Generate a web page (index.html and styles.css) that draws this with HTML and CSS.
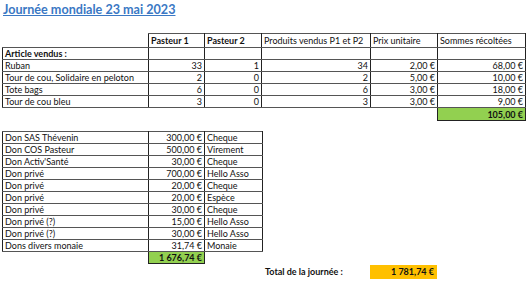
FILE: index.html
```html
<!DOCTYPE html>
<html lang="fr">
<head>
  <meta charset="UTF-8" />
  <title>Journée mondiale 23 mai 2023</title>
  <link rel="stylesheet" href="styles.css">
</head>
<body>

<h1 class="title">Journée mondiale 23 mai 2023</h1>

<table class="sheet sales">
  <colgroup>
    <col style="width:146px"><col style="width:56px"><col style="width:57px">
    <col style="width:109px"><col style="width:67px"><col style="width:88px">
  </colgroup>
  <tr class="head">
    <td class="blank"></td>
    <td class="bold">Pasteur 1</td>
    <td class="bold">Pasteur 2</td>
    <td>Produits vendus P1 et P2</td>
    <td>Prix unitaire</td>
    <td>Sommes récoltées</td>
  </tr>
  <tr>
    <td class="bold">Article vendus :</td>
    <td></td><td></td><td></td><td></td><td></td>
  </tr>
  <tr>
    <td>Ruban</td>
    <td class="num">33</td><td class="num">1</td><td class="num">34</td>
    <td class="num">2,00 €</td><td class="num">68,00 €</td>
  </tr>
  <tr>
    <td>Tour de cou, Solidaire en peloton</td>
    <td class="num">2</td><td class="num">0</td><td class="num">2</td>
    <td class="num">5,00 €</td><td class="num">10,00 €</td>
  </tr>
  <tr>
    <td>Tote bags</td>
    <td class="num">6</td><td class="num">0</td><td class="num">6</td>
    <td class="num">3,00 €</td><td class="num">18,00 €</td>
  </tr>
  <tr>
    <td>Tour de cou bleu</td>
    <td class="num">3</td><td class="num">0</td><td class="num">3</td>
    <td class="num">3,00 €</td><td class="num">9,00 €</td>
  </tr>
  <tr class="foot">
    <td class="blank"></td><td class="blank"></td><td class="blank"></td>
    <td class="blank"></td><td class="blank"></td>
    <td class="num bold green">105,00 €</td>
  </tr>
</table>

<table class="sheet dons">
  <colgroup>
    <col style="width:146px"><col style="width:56px"><col style="width:58px">
  </colgroup>
  <tr><td>Don SAS Thévenin</td><td class="num">300,00 €</td><td>Cheque</td></tr>
  <tr><td>Don COS Pasteur</td><td class="num">500,00 €</td><td>Virement</td></tr>
  <tr><td>Don Activ'Santé</td><td class="num">30,00 €</td><td>Cheque</td></tr>
  <tr><td>Don privé</td><td class="num">700,00 €</td><td>Hello Asso</td></tr>
  <tr><td>Don privé</td><td class="num">20,00 €</td><td>Cheque</td></tr>
  <tr><td>Don privé</td><td class="num">20,00 €</td><td>Espèce</td></tr>
  <tr><td>Don privé</td><td class="num">30,00 €</td><td>Cheque</td></tr>
  <tr><td>Don privé (?)</td><td class="num">15,00 €</td><td>Hello Asso</td></tr>
  <tr><td>Don privé (?)</td><td class="num">30,00 €</td><td>Hello Asso</td></tr>
  <tr><td>Dons divers monaie</td><td class="num">31,74 €</td><td>Monaie</td></tr>
  <tr class="foot">
    <td class="blank"></td>
    <td class="num bold green">1 676,74 €</td>
    <td class="blank"></td>
  </tr>
</table>

<div class="total">
  <span class="total-label">Total de la journée :</span>
  <span class="total-value">1 781,74 €</span>
</div>

</body>
</html>
```

FILE: styles.css
```css
* { box-sizing: border-box; }

body {
  margin: 0; padding: 0 0 0 2px;
  background: #fff; color: #111;
  font-family: Lato, 'Liberation Sans', sans-serif;
  font-size: 9px;
}

.title {
  margin: 0; padding: 2px 0 0 1px;
  font-size: 12.6px; line-height: 16px; font-weight: bold;
  color: #3a78c4; text-decoration: underline;
}

.sheet {
  border-collapse: collapse; table-layout: fixed;
}

.sheet td {
  height: 12px; padding: 0 2px;
  line-height: 11px; white-space: nowrap; overflow: hidden;
  border-left: 1px solid #222; border-right: 1px solid #222;
  border-top: 1px solid #555; border-bottom: 1px solid #555;
}

.sales { width: 523px; margin-top: 15px; }
.sales .head td { height: 14px; }
.sales .foot td { height: 13px; }

.dons { width: 260px; margin-top: 10px; }

.sheet td.blank { border: none; }
.num { text-align: right; }
.bold { font-weight: bold; }

.sheet td.green {
  background: #92d050; border: 1px solid #222;
}

.total {
  display: flex; align-items: center;
  margin-left: 259px; height: 15px;
}

.total-label {
  width: 109px; padding-left: 4px; font-weight: bold;
}

.total-value {
  width: 67px; height: 14px; line-height: 14px;
  padding-right: 3px; text-align: right; font-weight: bold;
  background: #ffc000;
}
```
